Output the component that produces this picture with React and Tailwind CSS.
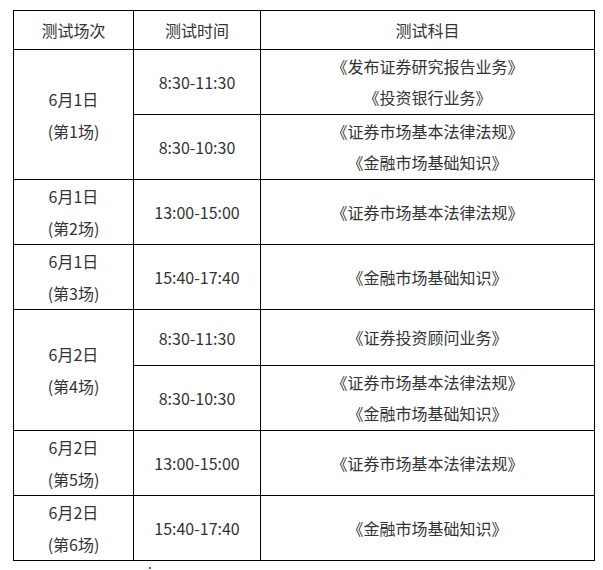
const rows = [
  {
    date: "6月1日",
    num: "(第1场)",
    slots: [
      { time: "8:30-11:30", subjects: ["《发布证券研究报告业务》", "《投资银行业务》"], h: "h-[65px]" },
      { time: "8:30-10:30", subjects: ["《证券市场基本法律法规》", "《金融市场基础知识》"], h: "h-[65px]" },
    ],
  },
  {
    date: "6月1日",
    num: "(第2场)",
    slots: [{ time: "13:00-15:00", subjects: ["《证券市场基本法律法规》"], h: "h-[65px]" }],
  },
  {
    date: "6月1日",
    num: "(第3场)",
    slots: [{ time: "15:40-17:40", subjects: ["《金融市场基础知识》"], h: "h-[65px]" }],
  },
  {
    date: "6月2日",
    num: "(第4场)",
    slots: [
      { time: "8:30-11:30", subjects: ["《证券投资顾问业务》"], h: "h-[56px]" },
      { time: "8:30-10:30", subjects: ["《证券市场基本法律法规》", "《金融市场基础知识》"], h: "h-[65px]" },
    ],
  },
  {
    date: "6月2日",
    num: "(第5场)",
    slots: [{ time: "13:00-15:00", subjects: ["《证券市场基本法律法规》"], h: "h-[65px]" }],
  },
  {
    date: "6月2日",
    num: "(第6场)",
    slots: [{ time: "15:40-17:40", subjects: ["《金融市场基础知识》"], h: "h-[65px]" }],
  },
];

const cell = "border border-black text-center align-middle p-0";

export default function App() {
  return (
    <div className="bg-white w-[603px] h-[570px] overflow-hidden pt-[10px] pl-[13px] text-[16px] text-[#333] [font-family:'Noto_Sans_CJK_SC',sans-serif]">
      <table className="border-collapse table-fixed w-[581px]">
        <colgroup>
          <col className="w-[120px]" />
          <col className="w-[127px]" />
          <col className="w-[334px]" />
        </colgroup>
        <thead>
          <tr className="h-[39px]">
            <th className={`${cell} font-normal`}>测试场次</th>
            <th className={`${cell} font-normal`}>测试时间</th>
            <th className={`${cell} font-normal`}>测试科目</th>
          </tr>
        </thead>
        <tbody>
          {rows.map((r, i) =>
            r.slots.map((s, j) => (
              <tr key={`${i}-${j}`} className={s.h}>
                {j === 0 && (
                  <td className={cell} rowSpan={r.slots.length}>
                    <div className="leading-[32px]">{r.date}</div>
                    <div className="leading-[32px]">{r.num}</div>
                  </td>
                )}
                <td className={cell}>{s.time}</td>
                <td className={cell}>
                  {s.subjects.map((t) => (
                    <div key={t} className="leading-[31px]">
                      {t}
                    </div>
                  ))}
                </td>
              </tr>
            ))
          )}
        </tbody>
      </table>
      <div className="ml-[136px] mt-[6px] w-[2px] h-[2px] bg-[#666]" />
    </div>
  );
}
